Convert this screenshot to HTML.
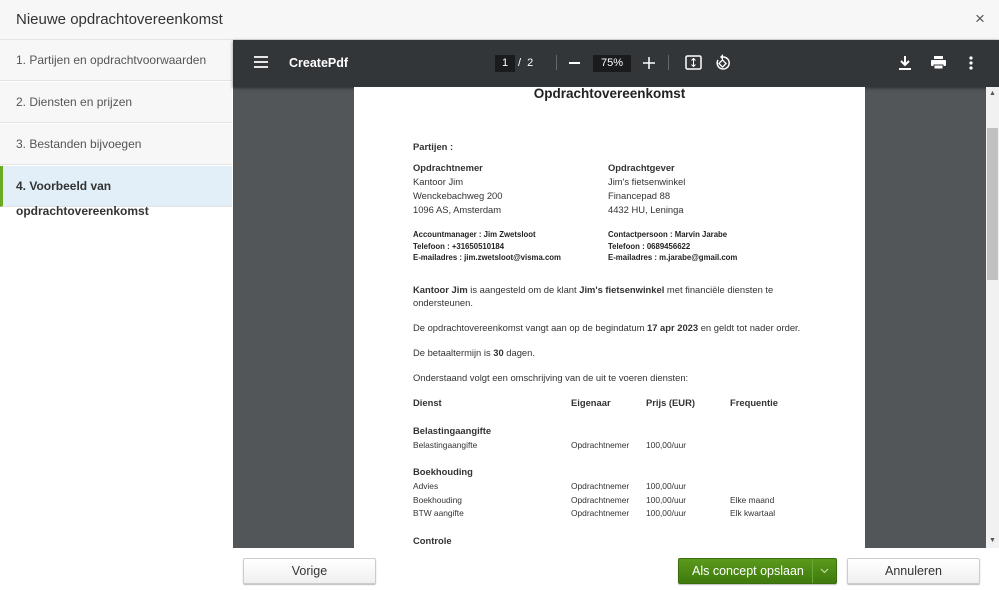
<!DOCTYPE html>
<html><head><meta charset="utf-8"><style>
*{margin:0;padding:0;box-sizing:border-box}
body{width:999px;height:590px;overflow:hidden;background:#fff;font-family:"Liberation Sans",sans-serif;position:relative}
.a{position:absolute;white-space:nowrap}
.hdr{left:0;top:0;width:999px;height:40px;background:#f7f7f7;border-bottom:1px solid #e4e4e4}
.side{left:0;top:40px;width:233px;height:550px;background:#fff}
.item{position:absolute;left:0;width:232px;height:41px;background:#f7f7f7;border-bottom:1px solid #e2e2e2;font-size:12px;color:#555;padding:13px 0 0 16px}
.p{font-size:9.4px;color:#333;line-height:12px}
.b{font-weight:bold}
.s{font-size:7.8px;font-weight:bold;color:#222}
.t{font-size:8.4px}
.btn{position:absolute;top:558px;height:26px;border:1px solid #ccc;border-radius:2px;background:linear-gradient(#fff,#f0f0f0);box-shadow:0 1px 1px #bbb;font-size:12.5px;color:#333;text-align:center;line-height:24px}
</style></head><body>
<div class="a hdr"></div>
<div class="a" style="left:16px;top:11px;font-size:15px;color:#333">Nieuwe opdrachtovereenkomst</div>
<div class="a" style="left:975px;top:9px;font-size:17px;color:#555">×</div>
<div class="a side"></div>
<div class="item" style="top:40px">1. Partijen en opdrachtvoorwaarden</div>
<div class="item" style="top:82px">2. Diensten en prijzen</div>
<div class="item" style="top:124px">3. Bestanden bijvoegen</div>
<div class="item" style="top:166px;background:#e2eff9;border-left:3px solid #6aaa22;padding-left:13px;font-weight:bold;color:#333">4. Voorbeeld van</div>
<div class="a" style="left:16px;top:204px;font-size:12px;font-weight:bold;color:#333">opdrachtovereenkomst</div>

<div class="a" style="left:233px;top:40px;width:766px;height:508px;background:#525659"></div>
<div class="a" style="left:233px;top:40px;width:766px;height:47px;background:#323639;box-shadow:0 1px 3px rgba(0,0,0,.5)"></div>
<svg class="a" style="left:254px;top:56px" width="14" height="12"><path d="M0 1h14M0 6h14M0 11h14" stroke="#fff" stroke-width="1.8"/></svg>
<div class="a" style="left:289px;top:56px;font-size:12.5px;font-weight:bold;color:#fff">CreatePdf</div>
<div class="a" style="left:495px;top:55px;width:20px;height:17px;background:#191b1c"></div>
<div class="a" style="left:502px;top:57px;font-size:11px;color:#fff">1</div>
<div class="a" style="left:518px;top:57px;font-size:11px;color:#fff">/ &nbsp;2</div>
<div class="a" style="left:556px;top:55px;width:1px;height:15px;background:#666"></div>
<div class="a" style="left:569px;top:62px;width:11px;height:1.5px;background:#fff"></div>
<div class="a" style="left:593px;top:55px;width:38px;height:17px;background:#191b1c"></div>
<div class="a" style="left:601px;top:57px;font-size:11px;color:#fff">75%</div>
<svg class="a" style="left:643px;top:57px" width="12" height="12"><path d="M0 6h12M6 0v12" stroke="#fff" stroke-width="1.5"/></svg>
<div class="a" style="left:668px;top:55px;width:1px;height:15px;background:#666"></div>
<svg class="a" style="left:685px;top:55px" width="17" height="15"><rect x="1" y="1" width="15" height="13" rx="1.5" fill="none" stroke="#fff" stroke-width="1.5"/><path d="M8.5 4v7M6.5 5.5l2-2 2 2M6.5 9.5l2 2 2-2" stroke="#fff" fill="none" stroke-width="1"/></svg>
<svg class="a" style="left:715px;top:54px" width="17" height="17"><path d="M8 3a6 6 0 1 1-5 3" fill="none" stroke="#fff" stroke-width="1.5"/><path d="M8 0v6l-3-3z" fill="#fff"/><rect x="5" y="7" width="5" height="5" transform="rotate(45 7.5 9.5)" fill="none" stroke="#fff" stroke-width="1.3"/></svg>
<svg class="a" style="left:899px;top:56px" width="12" height="14"><path d="M6 0v8M2 5l4 4 4-4" stroke="#fff" stroke-width="2" fill="none"/><path d="M0 13h12" stroke="#fff" stroke-width="2"/></svg>
<svg class="a" style="left:931px;top:56px" width="15" height="14"><rect x="3" y="0" width="9" height="3" fill="#fff"/><rect x="0" y="4" width="15" height="6" rx="1" fill="#fff"/><rect x="3" y="9" width="9" height="4" fill="#fff" stroke="#323639" stroke-width="1"/></svg>
<svg class="a" style="left:969px;top:56px" width="4" height="14"><circle cx="2" cy="2" r="1.6" fill="#fff"/><circle cx="2" cy="7" r="1.6" fill="#fff"/><circle cx="2" cy="12" r="1.6" fill="#fff"/></svg>

<div class="a" style="left:354px;top:87px;width:511px;height:461px;background:#fff"></div>
<div class="a" style="left:986px;top:87px;width:13px;height:461px;background:#f1f1f1"></div>
<div class="a" style="left:987px;top:128px;width:11px;height:152px;background:#c1c1c1"></div>
<div class="a" style="left:989px;top:90px;font-size:7px;color:#555">▲</div>
<div class="a" style="left:989px;top:537px;font-size:7px;color:#555">▼</div>

<div class="a b" style="left:354px;width:511px;text-align:center;top:86px;font-size:13.5px;color:#222">Opdrachtovereenkomst</div>
<div class="a p b" style="left:413px;top:141px">Partijen :</div>
<div class="a p b" style="left:413px;top:162px">Opdrachtnemer</div>
<div class="a p" style="left:413px;top:176px">Kantoor Jim</div>
<div class="a p" style="left:413px;top:190px">Wenckebachweg 200</div>
<div class="a p" style="left:413px;top:204px">1096 AS, Amsterdam</div>
<div class="a p b" style="left:608px;top:162px">Opdrachtgever</div>
<div class="a p" style="left:608px;top:176px">Jim's fietsenwinkel</div>
<div class="a p" style="left:608px;top:190px">Financepad 88</div>
<div class="a p" style="left:608px;top:204px">4432 HU, Leninga</div>
<div class="a s" style="left:413px;top:230px">Accountmanager : Jim Zwetsloot</div>
<div class="a s" style="left:413px;top:242px">Telefoon : +31650510184</div>
<div class="a s" style="left:413px;top:253px">E-mailadres : jim.zwetsloot@visma.com</div>
<div class="a s" style="left:608px;top:230px">Contactpersoon : Marvin Jarabe</div>
<div class="a s" style="left:608px;top:242px">Telefoon : 0689456622</div>
<div class="a s" style="left:608px;top:253px">E-mailadres : m.jarabe@gmail.com</div>
<div class="a p" style="left:413px;top:284px"><b>Kantoor Jim</b> is aangesteld om de klant <b>Jim's fietsenwinkel</b> met financiële diensten te</div>
<div class="a p" style="left:413px;top:297px">ondersteunen.</div>
<div class="a p" style="left:413px;top:322px">De opdrachtovereenkomst vangt aan op de begindatum <b>17 apr 2023</b> en geldt tot nader order.</div>
<div class="a p" style="left:413px;top:347px">De betaaltermijn is <b>30</b> dagen.</div>
<div class="a p" style="left:413px;top:372px">Onderstaand volgt een omschrijving van de uit te voeren diensten:</div>
<div class="a p b" style="left:413px;top:397px">Dienst</div>
<div class="a p b" style="left:571px;top:397px">Eigenaar</div>
<div class="a p b" style="left:646px;top:397px">Prijs (EUR)</div>
<div class="a p b" style="left:730px;top:397px">Frequentie</div>
<div class="a p b" style="left:413px;top:425px">Belastingaangifte</div>
<div class="a p t" style="left:413px;top:439px">Belastingaangifte</div>
<div class="a p t" style="left:571px;top:439px">Opdrachtnemer</div>
<div class="a p t" style="left:646px;top:439px">100,00/uur</div>
<div class="a p b" style="left:413px;top:466px">Boekhouding</div>
<div class="a p t" style="left:413px;top:480px">Advies</div>
<div class="a p t" style="left:571px;top:480px">Opdrachtnemer</div>
<div class="a p t" style="left:646px;top:480px">100,00/uur</div>
<div class="a p t" style="left:413px;top:494px">Boekhouding</div>
<div class="a p t" style="left:571px;top:494px">Opdrachtnemer</div>
<div class="a p t" style="left:646px;top:494px">100,00/uur</div>
<div class="a p t" style="left:730px;top:494px">Elke maand</div>
<div class="a p t" style="left:413px;top:507px">BTW aangifte</div>
<div class="a p t" style="left:571px;top:507px">Opdrachtnemer</div>
<div class="a p t" style="left:646px;top:507px">100,00/uur</div>
<div class="a p t" style="left:730px;top:507px">Elk kwartaal</div>
<div class="a p b" style="left:413px;top:535px">Controle</div>

<div class="btn" style="left:243px;width:133px">Vorige</div>
<div class="btn" style="left:678px;width:159px;background:linear-gradient(#5a9a1c,#3f7a0c);border-color:#3b6f0c;color:#fff;text-align:left;padding-left:13px">Als concept opslaan</div>
<div class="a" style="left:812px;top:559px;width:1px;height:24px;background:#6aa83a"></div>
<svg class="a" style="left:820px;top:568px" width="9" height="6"><path d="M1 1l3.5 3.5L8 1" stroke="#cfe5b8" fill="none"/></svg>
<div class="btn" style="left:847px;width:133px">Annuleren</div>
</body></html>
